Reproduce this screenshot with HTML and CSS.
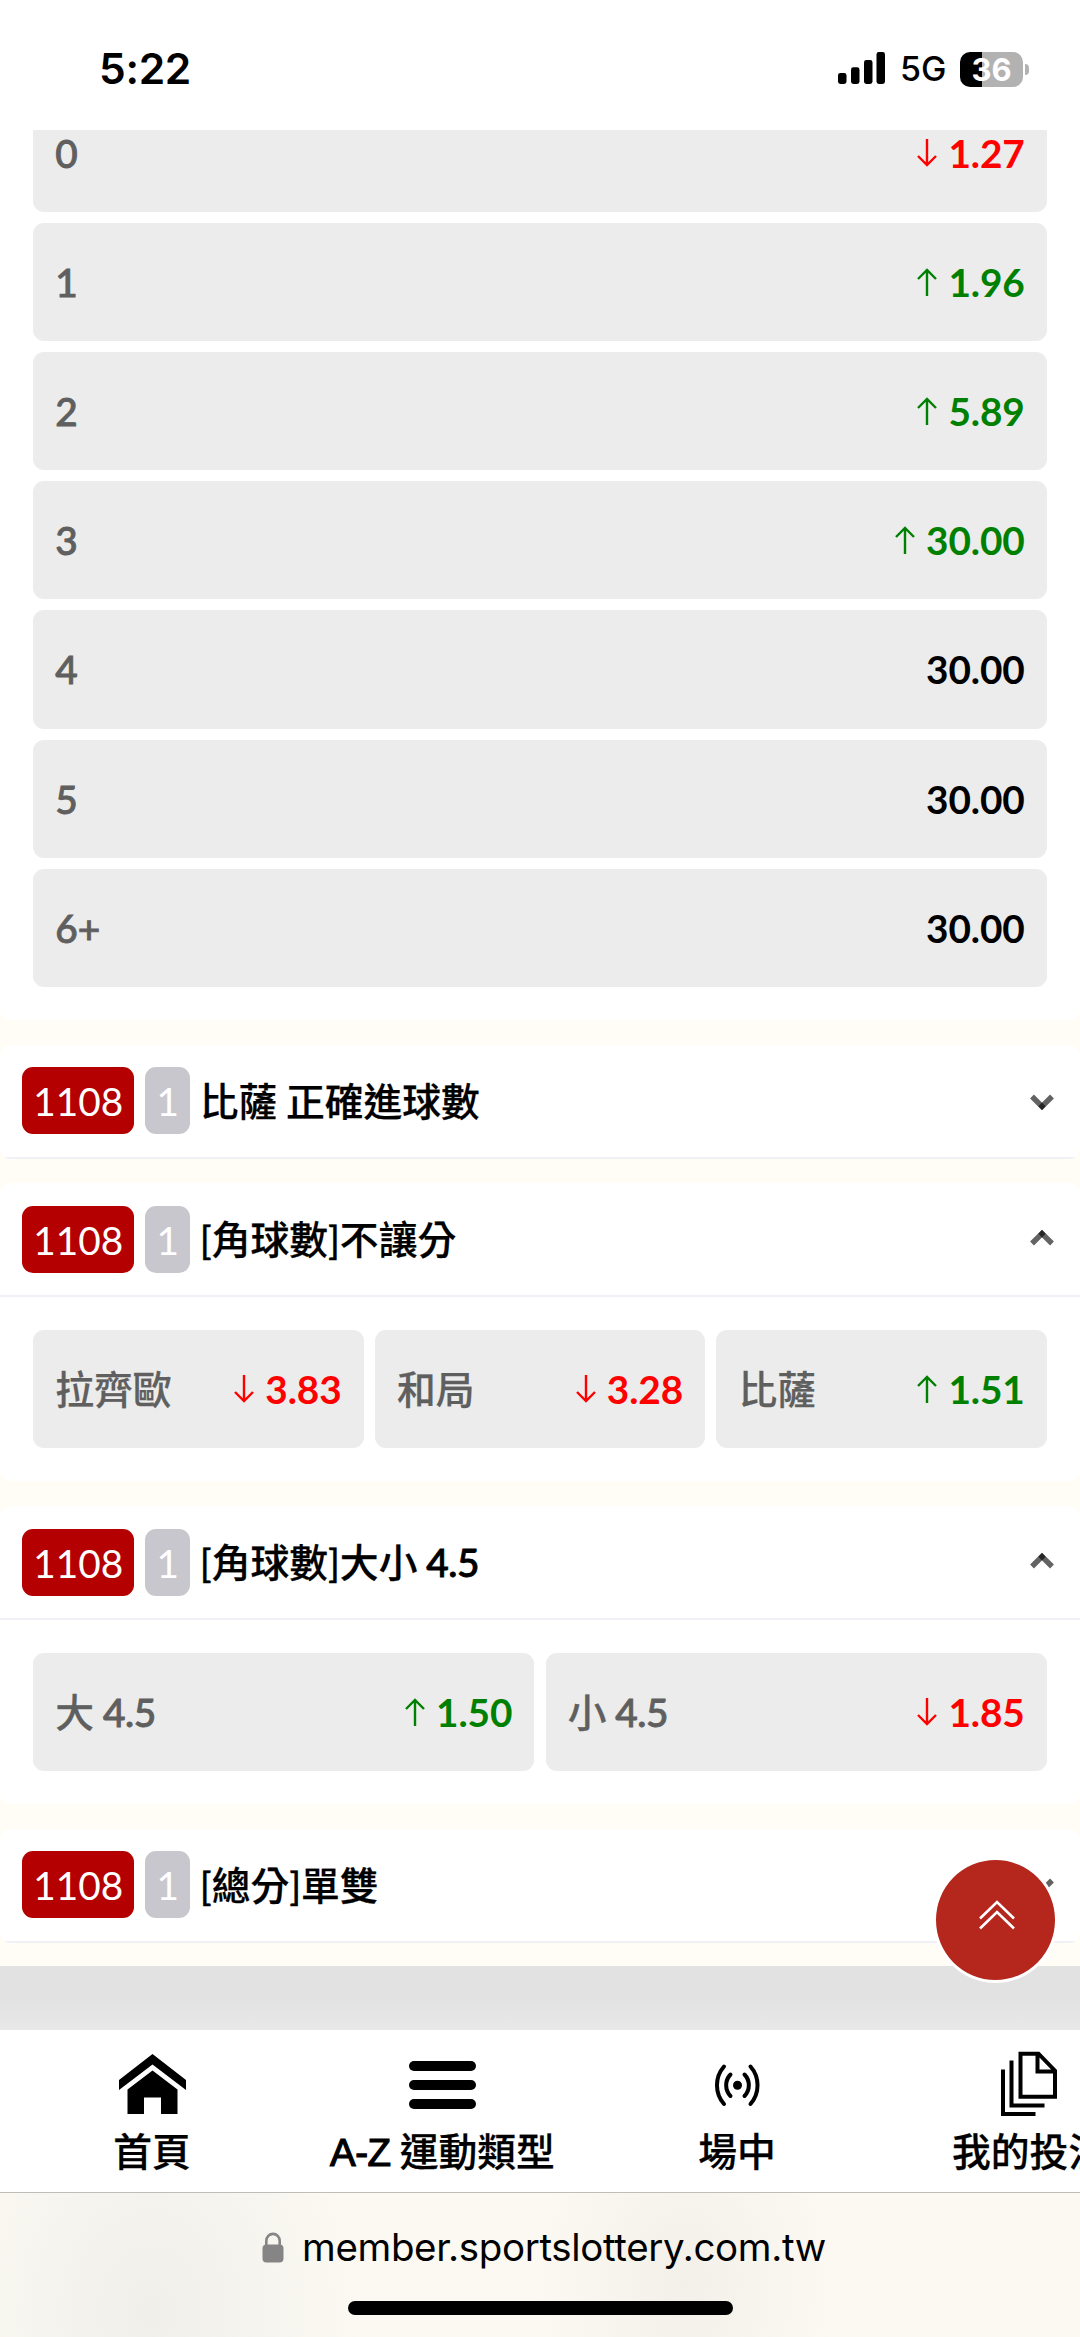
FILE: index.html
```
<!DOCTYPE html>
<html lang="zh-Hant">
<head>
<meta charset="utf-8">
<title>member.sportslottery.com.tw</title>
<link rel="stylesheet" href="styles.css">
</head>
<body>
<svg width="0" height="0" class="defs">
  <symbol id="up" viewBox="0 0 20 28"><path d="M10 28V2M1 11l9-9 9 9" fill="none" stroke="currentColor" stroke-width="2.4"/></symbol>
  <symbol id="down" viewBox="0 0 20 28"><path d="M10 0v26M1 17l9 9 9-9" fill="none" stroke="currentColor" stroke-width="2.4"/></symbol>
  <symbol id="chev-down" viewBox="0 0 24 16"><path d="M2 2.5l10 10 10-10" fill="none" stroke="#636363" stroke-width="5.4"/><path d="M12 8.6l3.6 3.6-3.6 3.8-3.6-3.8z" fill="#262626"/></symbol>
  <symbol id="chev-up" viewBox="0 0 24 16"><path d="M2 13.5l10-10 10 10" fill="none" stroke="#636363" stroke-width="5.4"/><path d="M12 7.4l3.6-3.6L12 0 8.4 3.8z" fill="#262626"/></symbol>
</svg>
<div class="screen">
  <header class="status">
    <span class="time">5:22</span>
    <div class="indicators">
      <svg class="signal" width="47" height="32" viewBox="0 0 47 32"><rect x="0" y="21" width="8.5" height="11" rx="2.4"/><rect x="13" y="15.3" width="8.5" height="16.7" rx="2.4"/><rect x="26" y="8" width="8.5" height="24" rx="2.4"/><rect x="38.5" y="0" width="8.5" height="32" rx="2.4"/></svg>
      <span class="net">5G</span>
      <span class="battery">36</span>
      <span class="nub"></span>
    </div>
  </header>

  <main class="content">
    <section class="card first">
      <div class="rows">
        <div class="odd"><span>0</span><b class="fall"><svg><use href="#down"/></svg>1.27</b></div>
        <div class="odd"><span>1</span><b class="rise"><svg><use href="#up"/></svg>1.96</b></div>
        <div class="odd"><span>2</span><b class="rise"><svg><use href="#up"/></svg>5.89</b></div>
        <div class="odd"><span>3</span><b class="rise"><svg><use href="#up"/></svg>30.00</b></div>
        <div class="odd"><span>4</span><b>30.00</b></div>
        <div class="odd"><span>5</span><b>30.00</b></div>
        <div class="odd"><span>6+</span><b>30.00</b></div>
      </div>
    </section>
    <section class="card">
      <div class="head"><span class="code">1108</span><span class="single">1</span><h2>比薩 正確進球數</h2><svg class="chev low"><use href="#chev-down"/></svg></div>
    </section>
    <section class="card">
      <div class="head"><span class="code">1108</span><span class="single">1</span><h2>[角球數]不讓分</h2><svg class="chev"><use href="#chev-up"/></svg></div>
      <div class="rows three">
        <div class="odd"><span>拉齊歐</span><b class="fall"><svg><use href="#down"/></svg>3.83</b></div>
        <div class="odd"><span>和局</span><b class="fall"><svg><use href="#down"/></svg>3.28</b></div>
        <div class="odd"><span>比薩</span><b class="rise"><svg><use href="#up"/></svg>1.51</b></div>
      </div>
    </section>
    <section class="card">
      <div class="head"><span class="code">1108</span><span class="single">1</span><h2>[角球數]大小 <i>4.5</i></h2><svg class="chev"><use href="#chev-up"/></svg></div>
      <div class="rows two">
        <div class="odd"><span>大 <i>4.5</i></span><b class="rise"><svg><use href="#up"/></svg>1.50</b></div>
        <div class="odd"><span>小 <i>4.5</i></span><b class="fall"><svg><use href="#down"/></svg>1.85</b></div>
      </div>
    </section>
    <section class="card">
      <div class="head"><span class="code">1108</span><span class="single">1</span><h2>[總分]單雙</h2><svg class="chev low"><use href="#chev-down"/></svg></div>
    </section>
  </main>

  <div class="strip"></div>

  <nav class="tabs">
    <a class="tab home"><svg width="67" height="66" viewBox="0 0 67 66"><path d="M33.5 3L67 29v10L33.5 13.500 0 39V29z"/><path d="M33.500 19.500L58.500 38.500V63H42V46.500H25V63H8.500V38.500z"/></svg><span>首頁</span></a>
    <a class="tab sports"><svg width="67" height="66" viewBox="0 0 67 66"><rect y="10" width="67" height="10" rx="5"/><rect y="29" width="67" height="10" rx="5"/><rect y="48" width="67" height="10" rx="5"/></svg><span><em>A-Z </em>運動類型</span></a>
    <a class="tab live"><svg width="52" height="66" viewBox="0 0 52 66"><circle cx="26.500" cy="34.300" r="4.500"/><path d="M13 15.500a28.500 28.500 0 0 0 0 37.500M39.500 15.500a28.500 28.500 0 0 1 0 37.500M19.500 23.500a15.500 15.500 0 0 0 0 21.500M33.500 23.500a15.500 15.500 0 0 1 0 21.500" fill="none" stroke="#000" stroke-width="4" stroke-linecap="round"/></svg><span>場中</span></a>
    <a class="tab bets"><svg width="57" height="66" viewBox="0 0 57 66"><path d="M19.500 2.700H37.500L54 19.700V45.700H19.500zM36.500 2.700V20.500H54M10.500 9.500V54.500H43.500M2 18.500V63H34.500" fill="none" stroke="#000" stroke-width="4"/></svg><span>我的投注</span></a>
  </nav>

  <footer class="browser">
    <div class="address"><svg width="22" height="31" viewBox="0 0 22 31"><rect x=".5" y="12.500" width="21" height="18" rx="4" fill="#858585"/><path d="M4.300 14V9a6.600 7 0 0 1 13.400 0v5" fill="none" stroke="#858585" stroke-width="2.600"/></svg><span>member.sportslottery.com.tw</span></div>
    <div class="grip"></div>
  </footer>

  <button class="totop"><svg width="36" height="30" viewBox="0 0 36 30"><path d="M1 18.500L18 2l17 16.500M1 28.500L18 12l17 16.500" fill="none" stroke="#fff" stroke-width="2.600"/></svg></button>
</div>
</body>
</html>
```
FILE: styles.css
```
* { box-sizing: border-box; }
body { margin: 0; background: #fff; color: #000; font-family: Lato, "Noto Sans CJK TC", sans-serif; font-size: 38.77px; }
i { font-style: normal; -webkit-text-stroke: .9px; letter-spacing: -.4px; }
.defs { position: absolute; }
.screen { position: relative; width: 1080px; height: 2337px; overflow: hidden; display: flex; flex-direction: column; }

.status { height: 130px; flex: none; display: flex; justify-content: space-between; padding: 0 51px 0 99px; font-family: Inter, sans-serif; background: #fff; }
.time { font-size: 42.5px; font-weight: 600; line-height: 52px; margin-top: 43px; letter-spacing: -.3px; }
.indicators { display: flex; align-items: center; height: 36px; margin-top: 51px; }
.signal { margin-top: -2px; margin-right: 14px; }
.net { font-size: 34px; font-weight: 500; width: 61px; padding-left: 1px; line-height: 36px; }
.battery { width: 63px; height: 35px; border-radius: 10px; background: linear-gradient(90deg, #000 22px, #b2b2b2 22px); color: #fff; font-size: 31px; font-weight: 700; line-height: 35px; text-align: center; }
.nub { width: 4px; height: 11px; margin-left: 2px; background: #b2b2b2; border-radius: 0 4px 4px 0; }

.content { height: 1836px; flex: none; overflow: hidden; background: #fffdf5; display: flex; flex-direction: column; gap: 24.9px; }
.card { flex: none; background: #fff; border-radius: 11px; overflow: hidden; }
.first { margin-top: -69.700px; }
.head { display: flex; align-items: center; height: 113.500px; padding: 0 26px 0 22.200px; border-bottom: 2.770px solid #f0f0f7; }
.code, .single { height: 67px; line-height: 68px; border-radius: 11px; color: #fff; text-align: center; }
.code { width: 112px; background: #b40000; margin-right: 11px; }
.single { width: 45px; background: #c8c7ce; margin-right: 9.500px; }
h2 { flex: 1; margin: 0; font-size: 38.77px; font-weight: 500; line-height: 66px; word-spacing: -1px; -webkit-text-stroke: .25px; }
.chev { width: 24px; height: 16px; margin-top: -3px; }
.low { margin-top: 3px; }

.rows { display: grid; gap: 11.080px; padding: 33.200px; }
.two { grid-template-columns: repeat(2, 1fr); }
.three { grid-template-columns: repeat(3, 1fr); }
.odd { display: flex; align-items: center; justify-content: space-between; height: 118.150px; padding: 0 22.150px; background: #ececec; border-radius: 11px; line-height: 60px; }
.odd span { color: #5f5f5f; font-weight: 500; word-spacing: -1px; -webkit-text-stroke: .25px; }
.first .odd span { -webkit-text-stroke: .9px; }
.odd b { display: flex; align-items: center; font-weight: 700; letter-spacing: -.1px; }
.odd svg { width: 20px; height: 28px; margin-right: 11px; }
.rise { color: #008000; }
.fall { color: #f00; }

.strip { height: 63.500px; flex: none; background: linear-gradient(#e2e2e2 50%, #e8e8e8); }

.tabs { height: 163.500px; flex: none; display: flex; background: #fff; border-bottom: 1.500px solid #bdbdb9; font-family: Inter, "Noto Sans CJK TC", sans-serif; font-weight: 500; overflow: hidden; }
.tab { flex: none; display: flex; flex-direction: column; align-items: center; padding-top: 21px; white-space: nowrap; }
.tab span { line-height: 50px; margin-top: 10px; -webkit-text-stroke: .25px; }
.tab em { font-style: normal; font-family: "Liberation Sans", sans-serif; font-size: 38.500px; letter-spacing: -.500px; word-spacing: -1px; -webkit-text-stroke: 1.200px; }
.home { width: 304px; }
.sports { width: 277px; }
.live { width: 312px; }
.bets { width: 273px; }

.browser { flex: 1; background: radial-gradient(ellipse 210px 280px at 150px 120px, #f0efea, transparent), radial-gradient(ellipse 150px 200px at 685px 90px, #f3f0e9, transparent), #fbf9f2; display: flex; flex-direction: column; align-items: center; }
.address { align-self: flex-start; display: flex; align-items: center; gap: 18px; margin: 28px 0 0 262px; font: 400 38.500px/52px Inter, sans-serif; letter-spacing: -.340px; }
.grip { width: 385px; height: 14px; margin-top: 28px; border-radius: 7px; background: #000; }

.totop { position: absolute; left: 933px; top: 1857px; width: 125px; height: 126px; display: flex; align-items: flex-start; justify-content: center; padding: 40px 0 0 3px; border: 3px solid #fff; border-radius: 50%; background: #b5261c; }
```
